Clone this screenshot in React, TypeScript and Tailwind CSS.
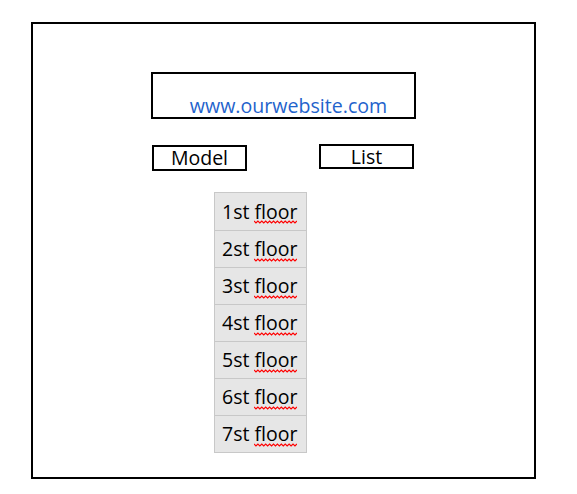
import React from "react";

const floors = ["1st", "2st", "3st", "4st", "5st", "6st", "7st"];

// spell-check style red zigzag under a word
function Squiggle({ children }: { children: React.ReactNode }) {
  return (
    <span className="relative inline-block">
      {children}
      <svg className="absolute left-0 top-full -mt-[1px] h-[4px] w-full" viewBox="0 0 44 4" preserveAspectRatio="none">
        <polyline
          points="0,1 2,3 4,1 6,3 8,1 10,3 12,1 14,3 16,1 18,3 20,1 22,3 24,1 26,3 28,1 30,3 32,1 34,3 36,1 38,3 40,1 42,3 44,1"
          fill="none"
          stroke="#ff0000"
          strokeWidth="1.2"
        />
      </svg>
    </span>
  );
}

export default function App() {
  return (
    <div className="min-h-screen bg-white pl-[31px] pt-[22px] font-['Open_Sans',sans-serif] text-black">
      <div className="flex h-[457px] w-[505px] flex-col border-2 border-black">
        {/* Website banner */}
        <div className="ml-[118px] mt-[48px] flex h-[47px] w-[265px] items-end justify-center border-2 border-black pb-[1px] pl-[10px]">
          <span className="text-[19.6px] leading-none text-[#1f63cc]">www.ourwebsite.com</span>
        </div>

        {/* Model / List buttons */}
        <div className="mt-[25px] flex items-start">
          <div className="ml-[119px] mt-[1px] flex h-[26px] w-[95px] items-center justify-center border-2 border-black text-[19.5px] leading-none">
            Model
          </div>
          <div className="ml-[72px] flex h-[25px] w-[95px] items-center justify-center border-2 border-black text-[19.5px] leading-none">
            List
          </div>
        </div>

        {/* Floors */}
        <div className="ml-[181px] mt-[21px] flex w-[93px] flex-col border border-[#c8c8c8] bg-[#e6e6e6]">
          {floors.map((f, i) => (
            <div
              key={f}
              className={`flex h-[37px] items-center pl-[7px] text-[19.5px] leading-none ${i > 0 ? "border-t border-[#c8c8c8]" : ""}`}
            >
              {f}&nbsp;
              <Squiggle>floor</Squiggle>
            </div>
          ))}
        </div>
      </div>
    </div>
  );
}
